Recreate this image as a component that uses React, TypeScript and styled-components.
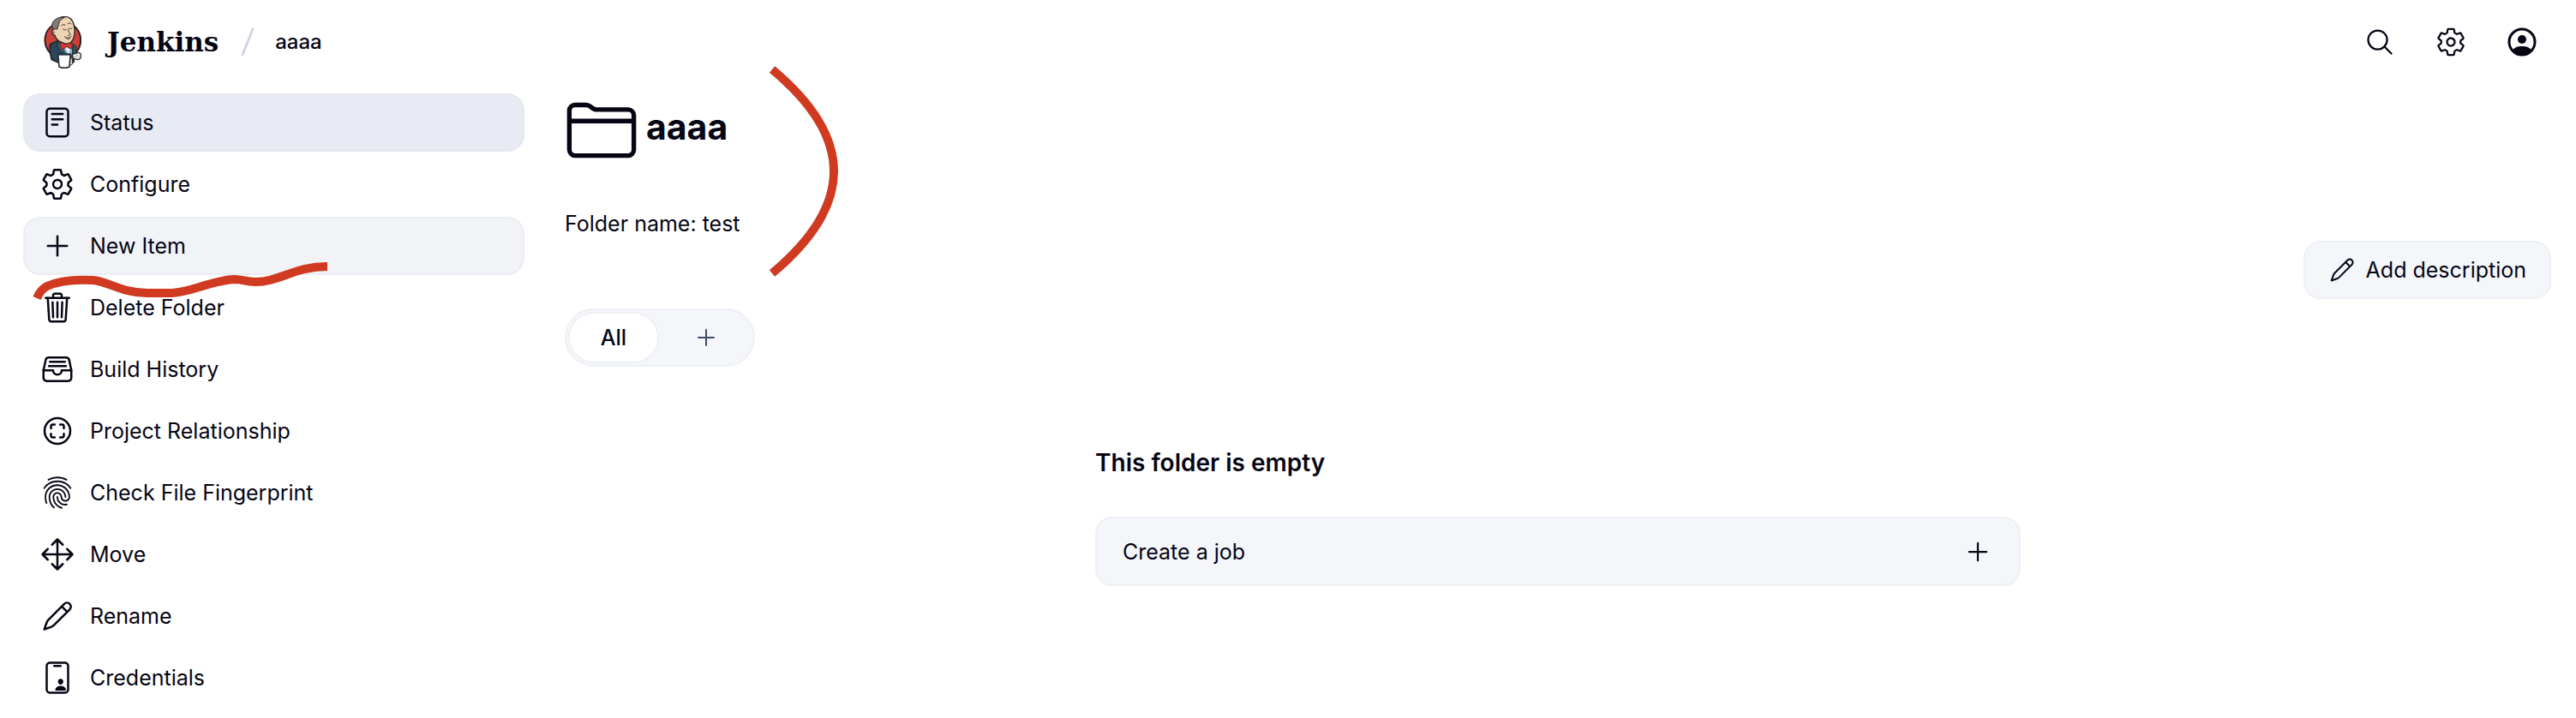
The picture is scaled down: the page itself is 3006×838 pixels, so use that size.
import React from "react";
import styled, { createGlobalStyle } from "styled-components";
import {
  IoAddOutline,
  IoFileTrayFullOutline,
  IoFingerPrintOutline,
  IoFolderOutline,
  IoIdCardOutline,
  IoMoveOutline,
  IoReaderOutline,
  IoScanCircleOutline,
  IoSearchOutline,
  IoSettingsOutline,
  IoTrashOutline,
} from "react-icons/io5";

const GlobalStyle = createGlobalStyle`
  *, *::before, *::after { box-sizing: border-box; }
  body {
    margin: 0;
    background: #fff;
    color: #050514;
    font-family: Inter, "Liberation Sans", sans-serif;
    font-size: 25px;
    font-weight: 400;
    line-height: 40px;
  }
  h1, h2, p, ul { margin: 0; padding: 0; }
  a { color: inherit; text-decoration: none; }
  button { font: inherit; color: inherit; margin: 0; cursor: pointer; }
  svg { display: block; flex: none; }
`;

const Header = styled.header`
  display: flex;
  align-items: center;
  justify-content: space-between;
  height: 98px;
  padding: 0 29px 0 51px;
`;

const Breadcrumbs = styled.nav`
  display: flex;
  align-items: center;
`;

const Brand = styled.a`
  display: flex;
  align-items: center;
  gap: 30px;
  font-family: "DejaVu Serif", serif;
  font-size: 31px;
  font-weight: 700;
`;

const Slash = styled.svg`
  margin: 0 24px 0 26px;
`;

const Crumb = styled.a`
  font-size: 24px;
  font-weight: 500;
`;

const HeaderActions = styled.div`
  display: flex;
  gap: 15px;
`;

const IconButton = styled.button`
  display: flex;
  align-items: center;
  justify-content: center;
  width: 68px;
  height: 68px;
  padding: 0;
  border: 0;
  border-radius: 20px;
  background: transparent;
`;

const Page = styled.div`
  display: grid;
  grid-template-columns: 585px minmax(0, 1fr);
  gap: 47px;
  padding: 11px 29px 17px 27px;
`;

const Sidebar = styled.nav`
  position: relative;
`;

const TaskList = styled.ul`
  display: flex;
  flex-direction: column;
  gap: 4px;
  list-style: none;
`;

type Tone = "active" | "hover" | "plain";

const toneBackground: Record<Tone, string> = {
  active: "#e8ebf4",
  hover: "#f1f3f7",
  plain: "transparent",
};

const toneBorder: Record<Tone, string> = {
  active: "#e4e8ee",
  hover: "#eaedf2",
  plain: "transparent",
};

const Task = styled.a<{ $tone: Tone }>`
  display: flex;
  align-items: center;
  gap: 18px;
  height: 68px;
  padding: 0 18px;
  border: 2px solid ${(p) => toneBorder[p.$tone]};
  border-radius: 20px;
  background: ${(p) => toneBackground[p.$tone]};
`;

const Main = styled.main`
  min-width: 0;
`;

const TitleRow = styled.div`
  position: relative;
  display: flex;
  align-items: flex-start;
  gap: 9px;
`;

const Title = styled.h1`
  font-size: 41px;
  font-weight: 700;
  line-height: 78px;
`;

const Mark = styled.svg`
  position: absolute;
  pointer-events: none;
  fill: none;
  stroke: #cf3a20;
  stroke-width: 10;
`;

const TaskMark = styled(Mark)`
  top: 192px;
  left: 8px;
`;

const TitleMark = styled(Mark)`
  top: -37px;
  left: 232px;
`;

const FolderName = styled.p`
  margin-top: 46px;
`;

const DescriptionActions = styled.div`
  display: flex;
  justify-content: flex-end;
  margin-bottom: 11px;
`;

const DescriptionButton = styled.button`
  display: flex;
  align-items: center;
  gap: 12px;
  height: 68px;
  padding: 0 27px;
  border: 2px solid #edf0f4;
  border-radius: 20px;
  background: #f4f6fa;
`;

const ViewTabs = styled.div`
  display: inline-flex;
  gap: 2px;
  height: 68px;
  padding: 2px;
  border: 2px solid #edf0f4;
  border-radius: 34px;
  background: #f4f6fa;
  vertical-align: top;
`;

const ViewTab = styled.a<{ $selected?: boolean }>`
  display: flex;
  align-items: center;
  justify-content: center;
  width: 106px;
  border: 2px solid ${(p) => (p.$selected ? "#edf0f4" : "transparent")};
  border-radius: 30px;
  background: ${(p) => (p.$selected ? "#fff" : "transparent")};
  color: ${(p) => (p.$selected ? "inherit" : "#404b68")};
  font-weight: 500;
`;

const EmptyState = styled.section`
  max-width: 1080px;
  margin: 92px auto 0;
`;

const EmptyTitle = styled.h2`
  margin-bottom: 43px;
  font-size: 28px;
  font-weight: 600;
  line-height: 40px;
`;

const EmptyAction = styled.a`
  display: flex;
  align-items: center;
  justify-content: space-between;
  height: 81px;
  padding: 0 30px;
  border: 2px solid #edf0f4;
  border-radius: 20px;
  background: #f4f6fa;
`;

const Pencil = ({ size }: { size: number }) => (
  <svg width={size} height={size} viewBox="0 0 512 512" fill="none" stroke="currentColor" strokeWidth="32" strokeLinecap="round" strokeLinejoin="round" aria-hidden="true">
    <path d="M358 75L125 308c-14 14-24 29-30 47L60 455l100-35c18-6 33-16 47-30L440 157c23-23 23-59 0-82s-59-23-82 0zM322 113l80 80" />
  </svg>
);

const Account = () => (
  <svg width="36" height="36" viewBox="0 0 36 36" aria-hidden="true">
    <circle cx="18" cy="18" r="15" fill="none" stroke="currentColor" strokeWidth="3" />
    <circle cx="18" cy="15" r="5" fill="currentColor" />
    <path d="M7 28c2-4 6-5 11-5s9 1 11 5c-3 4-7 5-11 5s-8-1-11-5z" fill="currentColor" />
  </svg>
);

const JenkinsLogo = () => (
  <svg width="44" height="61" viewBox="33 32 132 184" strokeLinejoin="round" strokeLinecap="round" aria-hidden="true">
    <ellipse cx="100" cy="116" rx="63" ry="64" fill="#cf3f37" stroke="#2c2224" strokeWidth="6" />
    <path d="M84 118l-28 12c-6 12 0 32 4 54l22 10h56l6-36-12-30z" fill="#2b4658" stroke="#1b2730" strokeWidth="5" />
    <path d="M100 128l12 42h18l4-40z" fill="#eef1f2" />
    <path d="M84 120l16 8 14 40-22-10-12-20zM138 130l10 10-4 26-10 4z" fill="#37586c" stroke="#1b2730" strokeWidth="3" />
    <path d="M104 144l14 24M130 146l-6 20" stroke="#7ea6c0" strokeWidth="6" />
    <path d="M70 76c-2 2-8 2-8 10 0 8 4 12 10 13 2 14 16 24 38 30 16 2 28-12 30-30 4-20 0-46-12-58-14-12-36-9-48 2-8 8-10 20-10 33z" fill="#ecd5b4" stroke="#2c2422" strokeWidth="4" />
    <path d="M66 78c-8-14-4-28 10-36 10-6 20-8 30-6-8 4-18 10-20 20-2 8-4 16-6 22-4-2-8-2-14 0z" fill="#817c79" stroke="#2c2422" strokeWidth="3" />
    <path d="M72 88c-4-4-7 0-4 4M94 66c4-6 10-6 14-3M118 58c5-4 9-2 11 1M100 77c4 4 9 4 12 1M122 74c4 3 7 3 10 0M118 78c2 9 6 12 9 18-3 4-6 4-9 3M106 104c8 5 16 5 24-1M112 110c6 3 10 2 14-1" fill="none" stroke="#3e302a" strokeWidth="3" />
    <path d="M92 126c6-2 14 2 20 6 4-4 12-8 18-6 4 6 4 14 0 20-6 0-12-4-16-8-4 5-12 10-18 10-4-8-6-16-4-22z" fill="#d13b36" stroke="#641f20" strokeWidth="3" />
    <path d="M134 166l14-4c8-5 16 0 16 8 0 12-8 16-16 14l-12-4z" fill="#f4f4f2" stroke="#2c2c2c" strokeWidth="4" />
    <path d="M146 170c5-3 9 0 10 4M142 176c4-1 8 0 9 4" fill="none" stroke="#666" strokeWidth="2" />
    <path d="M122 178l12 2 0 20-10 6z" fill="#dedfdf" stroke="#2c2c2c" strokeWidth="3" />
    <path d="M83 166h44l-4 44c-8 5-26 5-36 0z" fill="#fcfcfc" stroke="#2c2c2c" strokeWidth="5" />
    <path d="M86 166h38" stroke="#1f3545" strokeWidth="6" />
  </svg>
);

const tasks: { label: string; tone?: Tone; icon: React.ReactNode }[] = [
  { label: "Status", tone: "active", icon: <IoReaderOutline size={40} /> },
  { label: "Configure", icon: <IoSettingsOutline size={40} /> },
  { label: "New Item", tone: "hover", icon: <IoAddOutline size={40} /> },
  { label: "Delete Folder", icon: <IoTrashOutline size={40} /> },
  { label: "Build History", icon: <IoFileTrayFullOutline size={40} /> },
  { label: "Project Relationship", icon: <IoScanCircleOutline size={40} /> },
  { label: "Check File Fingerprint", icon: <IoFingerPrintOutline size={40} /> },
  { label: "Move", icon: <IoMoveOutline size={40} /> },
  { label: "Rename", icon: <Pencil size={40} /> },
  { label: "Credentials", icon: <IoIdCardOutline size={40} /> },
];

export default function App() {
  return (
    <>
      <GlobalStyle />
      <Header>
        <Breadcrumbs aria-label="Breadcrumbs">
          <Brand href="#home">
            <JenkinsLogo />
            Jenkins
          </Brand>
          <Slash width="16" height="34" viewBox="0 0 16 34" aria-hidden="true">
            <path d="M2 32L14 2" stroke="#ced6e3" strokeWidth="3" strokeLinecap="round" />
          </Slash>
          <Crumb href="#folder">aaaa</Crumb>
        </Breadcrumbs>
        <HeaderActions>
          <IconButton type="button" aria-label="Search">
            <IoSearchOutline size={36} />
          </IconButton>
          <IconButton type="button" aria-label="Manage Jenkins">
            <IoSettingsOutline size={36} />
          </IconButton>
          <IconButton type="button" aria-label="Account">
            <Account />
          </IconButton>
        </HeaderActions>
      </Header>
      <Page>
        <Sidebar aria-label="Folder tasks">
          <TaskList>
            {tasks.map((task) => (
              <li key={task.label}>
                <Task href="#task" $tone={task.tone ?? "plain"}>
                  {task.icon}
                  {task.label}
                </Task>
              </li>
            ))}
          </TaskList>
          <TaskMark width="360" height="60" viewBox="35 301 360 60" aria-hidden="true">
            <path d="M43 348C46 341 49 337 55 334C70 327 90 326 108 327C126 328 142 342 172 342H198C222 342 246 327 274 326C284 326 286 329 298 329C326 329 344 311 382 311" />
          </TaskMark>
        </Sidebar>
        <Main>
          <TitleRow>
            <IoFolderOutline size={86} />
            <Title>aaaa</Title>
            <TitleMark width="100" height="260" viewBox="892 72 100 260" aria-hidden="true">
              <path d="M902 81C998 161 998 239 902 319" />
            </TitleMark>
          </TitleRow>
          <FolderName>Folder name: test</FolderName>
          <DescriptionActions>
            <DescriptionButton type="button">
              <Pencil size={32} />
              Add description
            </DescriptionButton>
          </DescriptionActions>
          <ViewTabs>
            <ViewTab href="#all" $selected>
              All
            </ViewTab>
            <ViewTab href="#new-view" aria-label="New view">
              <IoAddOutline size={32} />
            </ViewTab>
          </ViewTabs>
          <EmptyState>
            <EmptyTitle>This folder is empty</EmptyTitle>
            <EmptyAction href="#create">
              Create a job
              <IoAddOutline size={36} />
            </EmptyAction>
          </EmptyState>
        </Main>
      </Page>
    </>
  );
}
